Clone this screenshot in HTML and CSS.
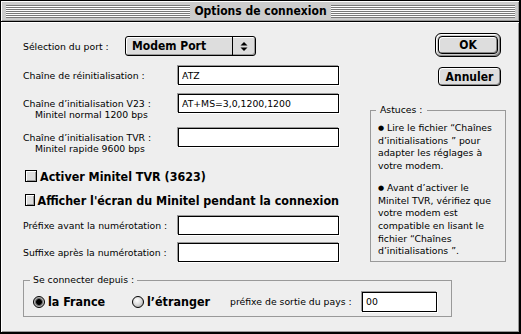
FILE: index.html
```html
<!DOCTYPE html>
<html lang="fr">
<head>
  <meta charset="UTF-8">
  <meta name="viewport" content="width=device-width, initial-scale=1.0">
  <title>Options de connexion</title>
  <link rel="stylesheet" href="styles.css">
</head>
<body>
  <div class="window">
    <div class="titlebar">
      <span class="stripes"></span>
      <span class="title">Options de connexion</span>
      <span class="stripes"></span>
    </div>

    <div class="content">
      <div class="main">
        <div class="form">
          <div class="row row-port">
            <span class="label">Sélection du port :</span>
            <div class="popup">
              <span class="popup-text">Modem Port</span>
              <span class="popup-arrows">
                <svg width="8" height="11" viewBox="0 0 8 11">
                  <path d="M0.5 4.5 L4 1 L7.5 4.5 Z" fill="#000"/>
                  <path d="M0.5 6.5 L4 10 L7.5 6.5 Z" fill="#000"/>
                </svg>
              </span>
            </div>
          </div>

          <div class="row row-reinit">
            <span class="label">Chaîne de réinitialisation :</span>
            <input class="field" type="text" value="ATZ">
          </div>

          <div class="row row-two row-v23">
            <span class="label">Chaîne d’initialisation V23 :<span class="sub">Minitel normal 1200 bps</span></span>
            <input class="field" type="text" value="AT+MS=3,0,1200,1200">
          </div>

          <div class="row row-two row-tvr">
            <span class="label">Chaîne d’initialisation TVR :<span class="sub">Minitel rapide 9600 bps</span></span>
            <input class="field" type="text" value="">
          </div>

          <div class="check check-tvr">
            <span class="box"></span>
            <span>Activer Minitel TVR (3623)</span>
          </div>

          <div class="check check-screen">
            <span class="box"></span>
            <span>Afficher l'écran du Minitel pendant la connexion</span>
          </div>

          <div class="row row-pre">
            <span class="label">Préfixe avant la numérotation :</span>
            <input class="field" type="text" value="">
          </div>

          <div class="row row-suf">
            <span class="label">Suffixe après la numérotation :</span>
            <input class="field" type="text" value="">
          </div>
        </div>

        <div class="side">
          <div class="buttons">
            <span class="default-ring"><span class="btn btn-ok">OK</span></span>
            <span class="btn btn-cancel">Annuler</span>
          </div>

          <fieldset class="group tips">
            <legend>Astuces :</legend>
            <p><span class="bullet">●</span> Lire le fichier “Chaînes<br>d’initialisations ” pour<br>adapter les réglages à<br>votre modem.</p>
            <p><span class="bullet">●</span> Avant d’activer le<br>Minitel TVR, vérifiez que<br>votre modem est<br>compatible en lisant le<br>fichier “Chaînes<br>d’initialisations ”.</p>
          </fieldset>
        </div>
      </div>

      <fieldset class="group connect">
        <legend>Se connecter depuis :</legend>
        <div class="radio-row">
          <span class="opt opt-france"><span class="radio on"></span>la France</span>
          <span class="opt opt-etranger"><span class="radio"></span>l’étranger</span>
          <span class="pays">préfixe de sortie du pays :</span>
          <input class="field country" type="text" value="00">
        </div>
      </fieldset>
    </div>
  </div>
</body>
</html>
```

FILE: styles.css
```css
body {
  margin: 0;
  background: #fff;
  font-family: "DejaVu Sans", sans-serif;
  font-size: 9.3px;
  color: #000;
}

.window {
  width: 521px;
  height: 334px;
  box-sizing: border-box;
  border: 1px solid #000;
  border-right-width: 2px;
  border-bottom-width: 2px;
  background: #eee;
  display: flex;
  flex-direction: column;
}

.titlebar {
  height: 20px;
  flex: none;
  border-bottom: 1px solid #000;
  background: #ccc;
  box-shadow: inset 1px 1px 0 #fff, inset -1px -1px 0 #999;
  display: flex;
  align-items: center;
  gap: 3px;
  padding: 0 4px 0 5px;
}

.stripes {
  flex: 1;
  height: 13px;
  background: repeating-linear-gradient(to bottom, #7a7a7a 0 1px, #fff 1px 2px);
}

.title,
.popup-text,
.btn,
.check,
.opt {
  font-family: "DejaVu Sans Condensed", "DejaVu Sans", sans-serif;
  font-stretch: condensed;
  font-weight: bold;
  font-size: 12px;
}

.check,
.opt {
  font-size: 12.4px;
}

.title {
  padding: 0 1px;
}

.content {
  flex: 1;
  box-shadow: inset 1px 1px 0 #fff, inset -1px -1px 0 #999;
  padding: 11px 0 0 22px;
}

.main {
  display: flex;
  gap: 31px;
}

.form {
  width: 316px;
  margin-top: 3px;
  display: flex;
  flex-direction: column;
}

.row {
  display: flex;
  align-items: center;
}

.label {
  width: 155px;
  flex: none;
  white-space: nowrap;
}

.row-port .label {
  width: 102px;
}

.row-reinit {
  margin-top: 10px;
}

.row-two {
  align-items: flex-start;
}

.row-two .label {
  padding-top: 4px;
  line-height: 11px;
}

.sub {
  display: block;
  padding-left: 12px;
}

.row-v23 {
  margin-top: 9px;
}

.row-tvr {
  margin-top: 8px;
}

.row-pre {
  margin-top: 9px;
}

.row-suf {
  margin-top: 8px;
}

.field {
  width: 161px;
  height: 19px;
  box-sizing: border-box;
  margin: 0;
  padding: 0 3px;
  border: 1px solid #000;
  border-radius: 0;
  background: #fff;
  font-family: "DejaVu Sans", sans-serif;
  font-size: 9.3px;
  color: #000;
  box-shadow: -1px -1px 0 #999, 1px 1px 0 #fff;
  outline: none;
}

.popup {
  width: 131px;
  height: 20px;
  box-sizing: border-box;
  border: 1px solid #000;
  border-radius: 3px;
  background: #ddd;
  box-shadow: inset 1px 1px 0 #fff, inset -1px -1px 0 #999;
  display: flex;
}

.popup-text {
  flex: 1;
  padding-left: 6px;
  line-height: 18px;
}

.popup-arrows {
  width: 22px;
  border-left: 1px solid #000;
  display: flex;
  align-items: center;
  justify-content: center;
}

.check {
  display: flex;
  align-items: center;
  gap: 3px;
  height: 14px;
  padding-left: 2px;
  white-space: nowrap;
}

.check-tvr {
  margin-top: 15px;
}

.check-screen {
  margin-top: 10px;
}

.box {
  width: 12px;
  height: 12px;
  box-sizing: border-box;
  border: 1px solid #000;
  background: #ddd;
  box-shadow: inset 1px 1px 0 #fff, inset -1px -1px 0 #999;
}

.side {
  width: 136px;
  display: flex;
  flex-direction: column;
}

.buttons {
  display: flex;
  flex-direction: column;
  align-items: flex-end;
  margin-right: 5px;
}

.default-ring {
  border: 1px solid #000;
  border-radius: 6px;
  padding: 2px;
  background: #ccc;
  box-shadow: inset 1px 1px 0 #fff, inset -1px -1px 0 #888;
}

.btn {
  display: flex;
  align-items: center;
  justify-content: center;
  box-sizing: border-box;
  border: 1px solid #000;
  border-radius: 4px;
  background: #ddd;
  box-shadow: inset 1px 1px 0 #fff, inset -1px -1px 0 #888;
}

.btn-ok {
  width: 60px;
  height: 18px;
}

.btn-cancel {
  width: 63px;
  height: 19px;
  margin-top: 10px;
}

.group {
  margin: 0;
  border: 1px solid #999;
  min-width: 0;
}

.group legend {
  padding: 0 4px;
  line-height: 12px;
}

.tips {
  margin-top: 18px;
  padding: 6px 2px 3px 7px;
  white-space: nowrap;
}

.tips legend {
  margin-left: -2px;
}

.tips p {
  margin: 0;
  line-height: 12.7px;
}

.tips p + p {
  margin-top: 9px;
}

.bullet {
  font-size: 7px;
  vertical-align: 1px;
}

.connect {
  width: 429px;
  box-sizing: border-box;
  margin-top: 12px;
  padding: 5px 0 4px 9px;
}

.connect legend {
  margin-left: -3px;
  padding: 0 3px;
}

.radio-row {
  display: flex;
  align-items: center;
  height: 21px;
}

.opt {
  display: flex;
  align-items: center;
  gap: 3px;
  white-space: nowrap;
}

.opt-france {
  width: 99px;
}

.opt-etranger {
  width: 98px;
}

.pays {
  width: 132px;
  white-space: nowrap;
}

.radio {
  width: 12px;
  height: 12px;
  box-sizing: border-box;
  border: 1px solid #000;
  border-radius: 50%;
  background: radial-gradient(circle at 40% 35%, #fff 0, #ddd 45%, #999 100%);
}

.radio.on {
  background: radial-gradient(circle, #000 0 2.5px, #444 3px, #bbb 4.5px, #999 100%);
}

.field.country {
  width: 75px;
  height: 20px;
}
```
